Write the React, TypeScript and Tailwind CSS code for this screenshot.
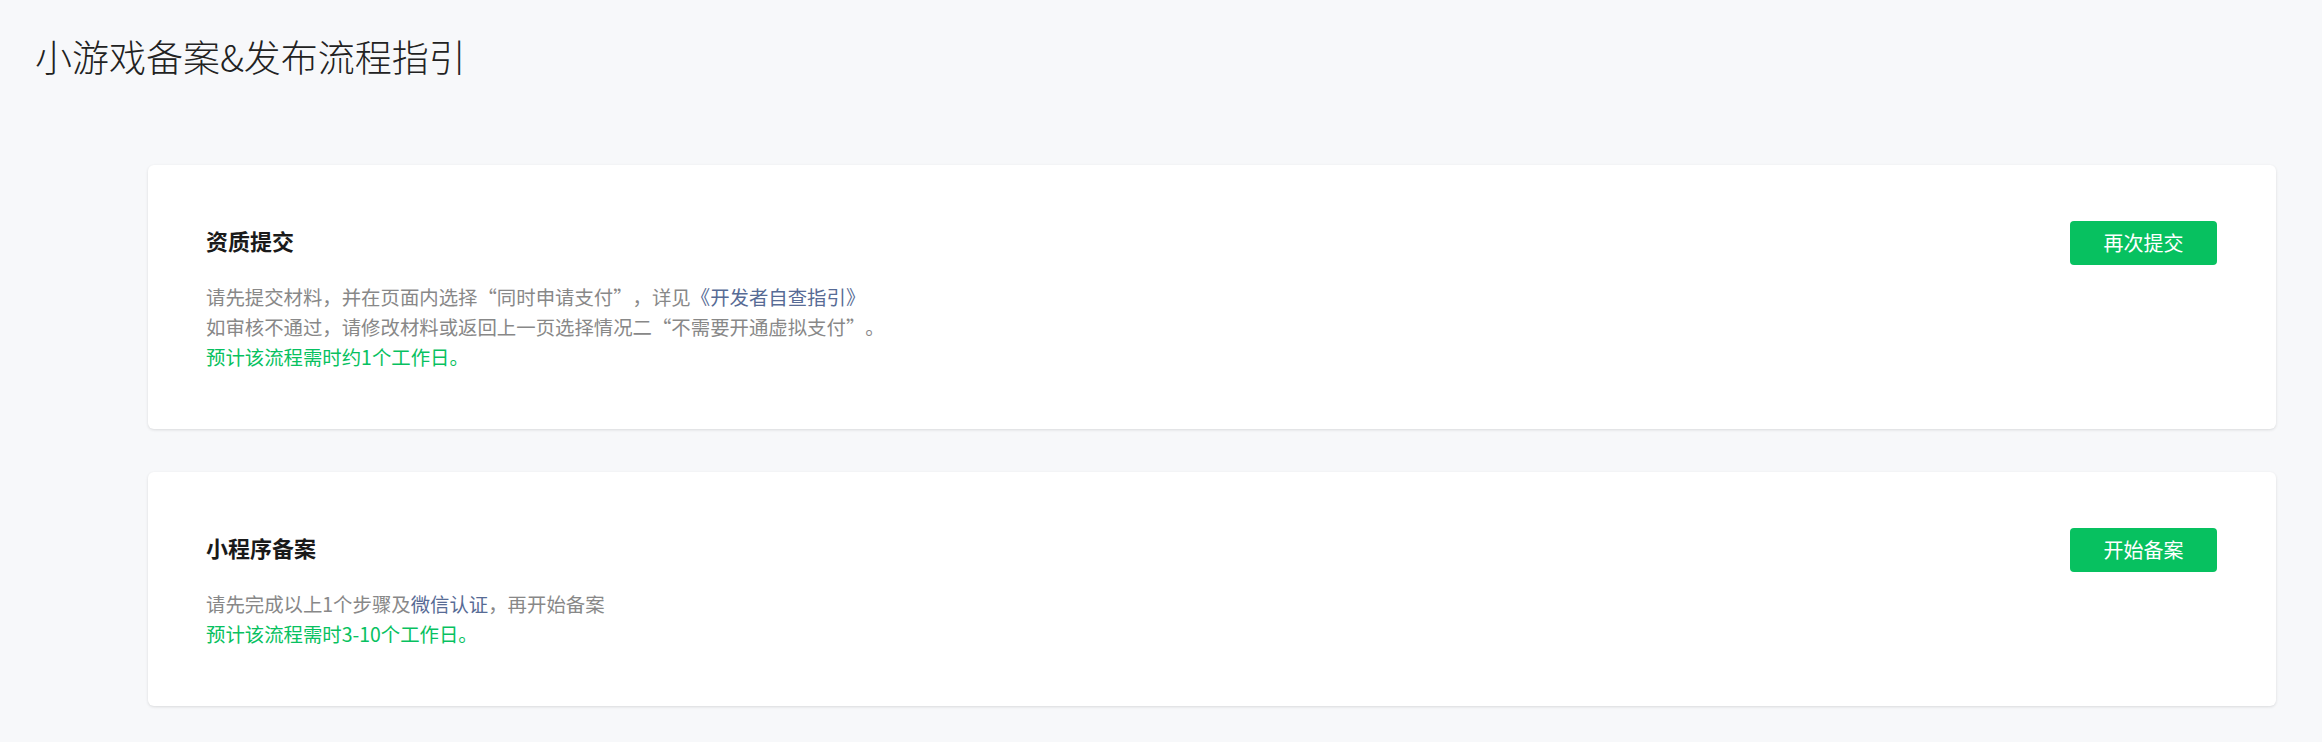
const card = 'flex items-start justify-between rounded-[6px] bg-white pt-[56px] pb-[57px] pl-[58px] pr-[59px] shadow-[0_1px_3px_rgba(0,0,0,0.12)]';

type Step = {
  title: string;
  action: string;
  body: React.ReactNode;
  eta: string;
};

const steps: Step[] = [
  {
    title: '资质提交',
    action: '再次提交',
    body: (
      <>
        <p>
          请先提交材料，并在页面内选择“同时申请支付”，详见
          <a className="text-[#576b95]">《开发者自查指引》</a>
        </p>
        <p>如审核不通过，请修改材料或返回上一页选择情况二“不需要开通虚拟支付”。</p>
      </>
    ),
    eta: '预计该流程需时约1个工作日。',
  },
  {
    title: '小程序备案',
    action: '开始备案',
    body: (
      <p>
        请先完成以上1个步骤及<a className="text-[#576b95]">微信认证</a>，再开始备案
      </p>
    ),
    eta: '预计该流程需时3-10个工作日。',
  },
];

function StepCard({ step }: { step: Step }) {
  return (
    <section className={card}>
      <div>
        <h2 className="mt-[4px] text-[22px] leading-[30px] font-bold text-[#1a1a1a]">{step.title}</h2>
        <div className="mt-[27px] text-[19.4px] leading-[30px] text-[#888888] [text-spacing-trim:space-all]">
          {step.body}
          <p className="text-[#07c160]">{step.eta}</p>
        </div>
      </div>
      <button className="h-[44px] w-[147px] rounded-[4px] bg-[#07c160] text-[20px] text-white">
        {step.action}
      </button>
    </section>
  );
}

export default function App() {
  return (
    <div className="min-h-[742px] bg-[#f7f8fa] font-['Noto_Sans_CJK_SC',sans-serif]">
      <h1 className="pt-[32px] pl-[35px] text-[37px] leading-[48px] font-light text-[#222222]">
        小游戏备案&amp;发布流程指引
      </h1>
      <main className="mt-[85px] ml-[148px] mr-[46px] flex flex-col gap-[43px]">
        {steps.map((s) => (
          <StepCard key={s.title} step={s} />
        ))}
      </main>
    </div>
  );
}
